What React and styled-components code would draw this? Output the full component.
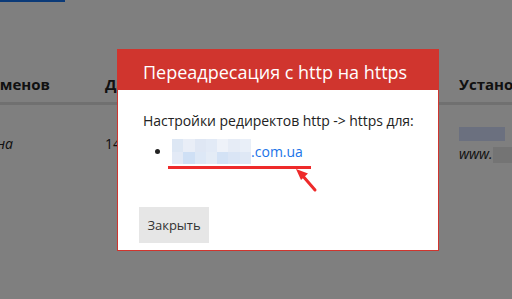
import styled, { createGlobalStyle } from "styled-components";

const Global = createGlobalStyle`
  html, body {
    margin: 0;
    padding: 0;
    background: #fff;
    overflow: hidden;
  }
  body {
    font-family: "Open Sans", "Liberation Sans", sans-serif;
    color: #222;
  }
`;

const Page = styled.div`
  width: 512px;
  height: 299px;
  position: relative;
  overflow: hidden;
`;

const TopLink = styled.div`
  width: 65px;
  height: 2px;
  background: #1774f0;
`;

const Table = styled.div`
  margin: 66px 0 0 -76px;
  display: grid;
  grid-template-columns: 181px 120px 234px 1fr;
  align-items: start;
`;

const HeadCell = styled.div`
  font-size: 15px;
  font-weight: 700;
  line-height: 24px;
  padding: 4px 0 6px;
  border-bottom: 3px solid #e0e0e0;
  white-space: nowrap;
  color: #222;
`;

const Cell = styled.div`
  padding-top: ${(p) => (p.$stack ? 17 : 28)}px;
  font-size: 14px;
  line-height: 21px;
  white-space: nowrap;
  font-style: ${(p) => (p.$italic ? "italic" : "normal")};
  color: #222;
`;

const Blur = styled.span`
  display: inline-block;
  vertical-align: middle;
  width: ${(p) => p.$w}px;
  height: ${(p) => p.$h}px;
  background: ${(p) => p.$c};
`;

const Overlay = styled.div`
  position: absolute;
  inset: 0;
  background: rgba(0, 0, 0, 0.5);
`;

const Modal = styled.div`
  position: relative;
  margin: 49px 0 0 117px;
  width: 320px;
  border: 1px solid #d0352e;
  background: #fff;
`;

const Header = styled.div`
  height: 40px;
  box-sizing: border-box;
  padding: 10px 25px 0;
  background: #d0352e;
  color: #fff;
  font-size: 18px;
  line-height: 24px;
`;

const Body = styled.div`
  padding: 21px 20px 0 25px;
  font-size: 14px;
  line-height: 20px;
  color: #222;
`;

const Text = styled.p`
  margin: 0;
  white-space: nowrap;
  letter-spacing: -0.05px;
`;

const List = styled.ul`
  margin: 11px 0 0;
  padding-left: 29px;
`;

const Link = styled.a`
  color: #1a73e8;
  text-decoration: none;
`;

const Pixels = styled.span`
  display: inline-grid;
  grid-template-columns: repeat(7, 11.3px);
  grid-auto-rows: 12.5px;
  vertical-align: top;
  margin: -3px 0 -2px;
`;

const Pixel = styled.span`
  background: ${(p) => p.$c};
`;

const Footer = styled.div`
  padding: 45px 21px 7px;
`;

const Button = styled.button`
  display: block;
  width: 70px;
  height: 36px;
  border: none;
  background: #e6e6e6;
  color: #333;
  font-family: "Open Sans", "Liberation Sans", sans-serif;
  font-size: 13px;
  padding: 0;
`;

const Marks = styled.svg`
  position: absolute;
  left: 0;
  top: 0;
  pointer-events: none;
`;

const pixelColors = [
  "#dde7f4", "#e9eef7", "#dfe7f4", "#e2eaf6", "#eef2f9", "#e6ecf6", "#e9eff8",
  "#e3eaf6", "#cfe0f5", "#dde8f6", "#e4ecf6", "#d3e2f5", "#dae5f5", "#dfe8f5",
];

export default function App() {
  return (
    <Page>
      <Global />
      <TopLink />
      <Table>
        <HeadCell>Кол-во доменов</HeadCell>
        <HeadCell>Дата</HeadCell>
        <HeadCell>Статус</HeadCell>
        <HeadCell>Установлено</HeadCell>
        <Cell $italic>Установлена</Cell>
        <Cell>14.05.2019</Cell>
        <Cell>активен</Cell>
        <Cell $stack>
          <Blur $w={46} $h={14} $c="#d6e0ff" />
          <br />
          <i>www.</i>
          <Blur $w={20} $h={16} $c="#e8e8e8" />
        </Cell>
      </Table>
      <Overlay>
        <Modal>
          <Header>Переадресация с http на https</Header>
          <Body>
            <Text>Настройки редиректов http -&gt; https для:</Text>
            <List>
              <li>
                <Link href="#">
                  <Pixels>
                    {pixelColors.map((c, i) => (
                      <Pixel key={i} $c={c} />
                    ))}
                  </Pixels>
                  .com.ua
                </Link>
              </li>
            </List>
          </Body>
          <Footer>
            <Button type="button">Закрыть</Button>
          </Footer>
          <Marks width="320" height="200" viewBox="0 0 320 200">
            <line x1="50" y1="117.5" x2="193" y2="117.5" stroke="#ee2a2a" strokeWidth="3" />
            <line x1="184" y1="125" x2="197" y2="140" stroke="#ee2a2a" strokeWidth="3" strokeLinecap="round" />
            <polygon points="178,119 190,123.5 183,130" fill="#ee2a2a" />
          </Marks>
        </Modal>
      </Overlay>
    </Page>
  );
}
